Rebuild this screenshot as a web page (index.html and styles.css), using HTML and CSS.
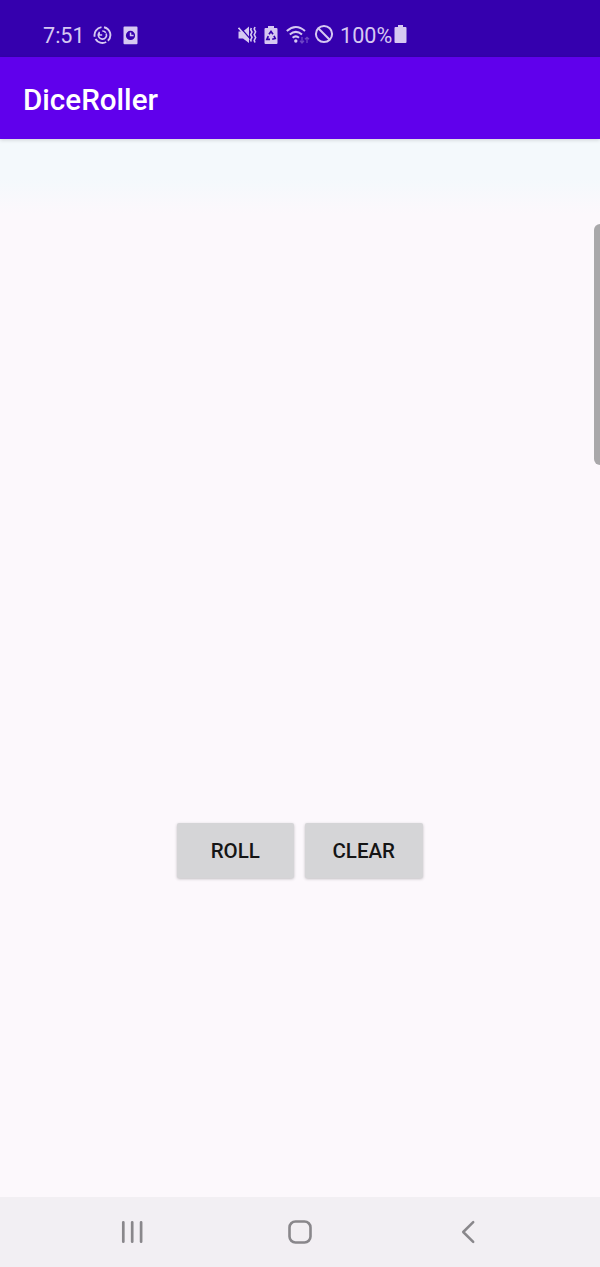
FILE: index.html
```
<!DOCTYPE html>
<html lang="en">
<head>
<meta charset="utf-8">
<title>DiceRoller</title>
<link rel="stylesheet" href="styles.css">
</head>
<body>
<div class="screen">
  <div class="status-bar">
    <div class="status-left">
      <span class="clock">7:51</span>
      <svg class="icon-sync" width="19" height="20" viewBox="0 0 19 20" fill="none" stroke="currentColor" stroke-width="1.9">
        <path d="M11 2.2A8 8 0 0 1 14.9 15.8M13.2 17A8 8 0 0 1 2.5 14M1.7 11.8A8 8 0 0 1 8.5 2.1"/>
        <path d="M5.8 8A4.1 4.1 0 1 0 13.2 8.5M12.8 7.8A4 4 0 0 0 9.3 6" stroke-width="1.6"/>
        <path d="M6.2 6.8V10H9.2" stroke-width="1.5"/>
      </svg>
      <svg class="icon-alarm" width="15" height="19" viewBox="0 0 15 19">
        <path fill="currentColor" fill-rule="evenodd" d="M1.5 .5H13.5Q14.5 .5 14.5 1.5V17.3Q14.5 18.3 13.5 18.3H1.5Q.5 18.3 .5 17.3V1.5Q.5 .5 1.5 .5ZM7.5 4.8A4.6 4.6 0 1 0 7.5 14A4.6 4.6 0 1 0 7.5 4.8ZM6.8 6.4H8.3V8.8H10.6V10.3H6.8Z"/>
      </svg>
    </div>
    <div class="status-right">
      <svg width="19" height="20" viewBox="0 0 19 20">
        <path fill="currentColor" d="M.5 6.5H5L11 1.5V18L5 13.5H.5Z"/>
        <path d="M1.5 1.8L12 13.6" stroke="#3500ae" stroke-width="1.4"/>
        <path d="M.5 2.8L11 15" stroke="currentColor" stroke-width="1.7"/>
        <path d="M13.3 3L12.7 4.7L14 7L12.7 9.7L14 12.3L12.7 15L13.3 16.5M17 2L16.2 4L17.6 6.8L16.2 9.7L17.6 12.5L16.2 15.5L17 17.5" fill="none" stroke="currentColor" stroke-width="1.6"/>
      </svg>
      <svg class="icon-saver" width="14" height="20" viewBox="0 0 14 20">
        <path fill="currentColor" d="M4 1H10V3H12.5Q13.5 3 13.5 4V18Q13.5 19 12.5 19H1.5Q.5 19 .5 18V4Q.5 3 1.5 3H4Z"/>
        <path fill="none" stroke="#3500ae" stroke-width="1.7" d="M5 9.3L7 6.5L9 9.3M10 10.8L11.2 13.5L8.2 14.3M6 14.3H2.9L4.3 11.2"/>
      </svg>
      <svg class="icon-wifi" width="24" height="20" viewBox="0 0 24 20" fill="none" stroke="currentColor" stroke-width="2">
        <path d="M.8 6Q9.8 -2 19 6M3.8 9.5Q9.8 4.2 16 9.5M6.6 12.8Q9.8 10 13 12.8"/>
        <circle cx="9.8" cy="16" r="1.7" fill="currentColor" stroke="none"/>
        <path class="dim" stroke-width="1.3" d="M16 12V18M14 15.8L16 18L18 15.8M21 18V12.3M19 14.3L21 12.3L23 14.3"/>
      </svg>
      <svg class="icon-block" width="20" height="20" viewBox="0 0 20 20" fill="none" stroke="currentColor" stroke-width="2">
        <circle cx="10" cy="10" r="8.1"/><path d="M4.3 4.3L15.7 15.7"/>
      </svg>
      <span class="percent">100%</span>
      <svg class="icon-battery" width="13" height="20" viewBox="0 0 13 20">
        <path fill="currentColor" d="M4 1H9V3H11.5Q12.5 3 12.5 4V18Q12.5 19 11.5 19H1.5Q.5 19 .5 18V4Q.5 3 1.5 3H4Z"/>
      </svg>
    </div>
  </div>
  <header class="app-bar"><h1 class="title">DiceRoller</h1></header>
  <main class="content">
    <div class="edge-handle"></div>
    <div class="actions">
      <button class="button">ROLL</button>
      <button class="button">CLEAR</button>
    </div>
  </main>
  <nav class="nav-bar">
    <svg width="24" height="26" viewBox="0 0 24 26" fill="none" stroke="currentColor" stroke-width="2.7" stroke-linecap="round"><path d="M3.3 3.3V22.7M12.2 3.3V22.7M21.1 3.3V22.7"/></svg>
    <svg width="26" height="26" viewBox="0 0 26 26" fill="none" stroke="currentColor" stroke-width="2.6"><rect x="2.5" y="2.5" width="21" height="21" rx="6"/></svg>
    <svg width="24" height="26" viewBox="0 0 24 26" fill="none" stroke="currentColor" stroke-width="2.5" stroke-linecap="round" stroke-linejoin="round"><path d="M17.2 3.2L7.2 13L17.2 22.8"/></svg>
  </nav>
</div>
</body>
</html>
```
FILE: styles.css
```
body {
  margin: 0;
  font-family: Roboto, "Liberation Sans", sans-serif;
}

.screen {
  display: flex;
  flex-direction: column;
  width: 600px;
  height: 1267px;
  overflow: hidden;
  background: #fcf8fc;
}

.status-bar {
  display: flex;
  flex: none;
  box-sizing: border-box;
  height: 57px;
  padding: 25px 0 0 43px;
  color: #d6c8f2;
  background: #3500ae;
}

.status-left,
.status-right {
  display: flex;
  align-items: flex-start;
  height: 20px;
}

.status-left {
  width: 195px;
}

.clock,
.percent {
  font-size: 21.6px;
  line-height: 22px;
}

.clock {
  width: 50px;
}

.icon-alarm {
  margin: 1px 0 0 11px;
}

.icon-saver {
  margin-left: 7px;
}

.icon-wifi {
  margin-left: 8px;
}

.icon-block {
  margin: -1px 0 0 4px;
}

.percent {
  width: 54px;
  margin-left: 6px;
}

.icon-battery {
  margin-top: -1px;
}

.dim {
  opacity: 0.35;
}

.app-bar {
  display: flex;
  flex: none;
  align-items: center;
  height: 82px;
  padding: 0 23px;
  background: #6000ec;
  box-shadow: 0 1px 4px rgba(0, 0, 0, 0.16);
  z-index: 1;
}

.title {
  margin: 0;
  padding-top: 3px;
  color: #fff;
  font-size: 29.6px;
  font-weight: 500;
  line-height: 34px;
}

.content {
  position: relative;
  flex: 1;
  background: linear-gradient(#f4f9fc 0, #f4f9fc 40px, #fcf8fc 75px);
}

.edge-handle {
  position: absolute;
  top: 85px;
  right: 0;
  width: 6px;
  height: 241px;
  border-radius: 6px 0 0 6px;
  background: #a9a8aa;
}

.actions {
  display: flex;
  justify-content: center;
  gap: 11px;
  padding: 684px 1px 0 0;
}

.button {
  width: 117.5px;
  height: 55px;
  padding: 0;
  border: 0;
  border-radius: 2px;
  color: #151515;
  background: #d5d5d7;
  box-shadow: 0 1px 3px rgba(0, 0, 0, 0.24);
  font-family: inherit;
  font-size: 20.5px;
  font-weight: 500;
}

.nav-bar {
  display: flex;
  flex: none;
  align-items: center;
  justify-content: space-between;
  box-sizing: border-box;
  height: 70px;
  padding: 0 120px;
  color: #89878b;
  background: #f2eff3;
}
```
